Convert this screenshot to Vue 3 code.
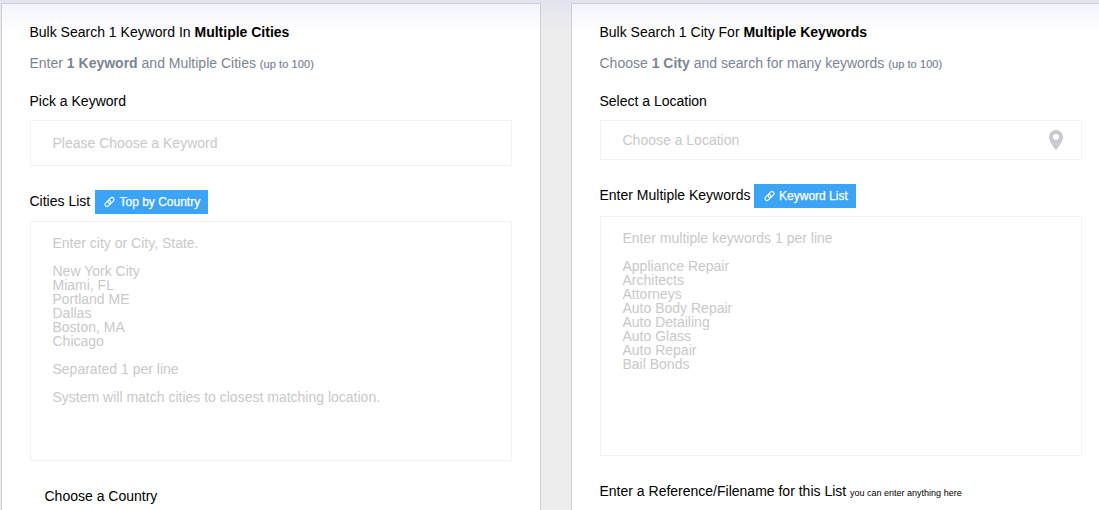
<script setup>
const cities = `Enter city or City, State.

New York City
Miami, FL
Portland ME
Dallas
Boston, MA
Chicago

Separated 1 per line

System will match cities to closest matching location.`
const keywords = `Enter multiple keywords 1 per line

Appliance Repair
Architects
Attorneys
Auto Body Repair
Auto Detailing
Auto Glass
Auto Repair
Bail Bonds`
</script>

<template>
  <main class="page">
    <section class="card">
      <h2 class="title">Bulk Search 1 Keyword In <b>Multiple Cities</b></h2>
      <p class="lead">Enter <b>1 Keyword</b> and Multiple Cities <small>(up to 100)</small></p>
      <div class="label">Pick a Keyword</div>
      <div class="field tall">Please Choose a Keyword</div>
      <div class="label row">
        <span class="row-text">Cities List</span>
        <a class="button top-cities">
          <svg class="link" viewBox="0 0 11 10">
            <g transform="rotate(-45 5.5 5)">
              <rect x="-0.1" y="3" width="6.9" height="4" rx="2" />
              <rect x="4.2" y="3" width="6.9" height="4" rx="2" />
            </g>
          </svg>
          <span>Top by Country</span>
        </a>
      </div>
      <div class="area">{{ cities }}</div>
      <div class="label country">Choose a Country</div>
    </section>
    <section class="card">
      <h2 class="title">Bulk Search 1 City For <b>Multiple Keywords</b></h2>
      <p class="lead">Choose <b>1 City</b> and search for many keywords <small>(up to 100)</small></p>
      <div class="label">Select a Location</div>
      <div class="field">
        <span>Choose a Location</span>
        <svg class="pin" viewBox="0 0 14 20"><path fill-rule="evenodd" d="M7 0a7 7 0 0 0-7 7c0 5 7 13 7 13s7-8 7-13a7 7 0 0 0-7-7zm0 4a3 3 0 1 1 0 6 3 3 0 0 1 0-6z" /></svg>
      </div>
      <div class="label row">
        <span class="row-text">Enter Multiple Keywords</span>
        <a class="button">
          <svg class="link" viewBox="0 0 11 10">
            <g transform="rotate(-45 5.5 5)">
              <rect x="-0.1" y="3" width="6.9" height="4" rx="2" />
              <rect x="4.2" y="3" width="6.9" height="4" rx="2" />
            </g>
          </svg>
          <span>Keyword List</span>
        </a>
      </div>
      <div class="area keywords">{{ keywords }}</div>
      <div class="label reference">Enter a Reference/Filename for this List <small>you can enter anything here</small></div>
    </section>
  </main>
</template>

<style>
body { overflow: hidden; }
</style>

<style scoped>
.page {
  box-sizing: border-box;
  width: 1099px;
  height: 510px;
  padding: 3px 0 0 1px;
  display: flex;
  gap: 30px;
  overflow: hidden;
  background: linear-gradient(#e4e4ef 0, #e5e5ef 4px, #ededed 32px);
  font: 14px/20px "Liberation Sans", Arial, sans-serif;
  color: #000;
}
.card {
  box-sizing: border-box;
  flex: 0 0 540px;
  height: 540px;
  padding: 18px 28px 0;
  border: 1px solid #cdcddb;
  background: linear-gradient(#f3f3fc 0, #fff 28px);
}
.title, .lead, .label { text-indent: -0.5px; }
.title { margin: 0; font-size: 14px; font-weight: 400; line-height: 20px; }
.lead { margin: 11px 0 0; color: #7c8494; line-height: 20px; }
.lead small { font-size: 11px; letter-spacing: 0.08px; -webkit-text-stroke: 0.2px #7c8494; }
.label { margin-top: 17px; height: 20px; }
.field {
  box-sizing: border-box;
  display: flex;
  align-items: center;
  justify-content: space-between;
  height: 40px;
  margin-top: 9px;
  padding: 0 18px 0 21.5px;
  border: 1px solid #f2f2f2;
  border-radius: 1px;
  color: #c9c9c9;
}
.tall { height: 46px; }
.pin { width: 14px; height: 20px; fill: #cbc8cf; }
.row { display: flex; align-items: center; gap: 3.6px; height: 24px; margin-top: 24px; }
.row-text { padding-bottom: 2px; }
.button {
  box-sizing: border-box;
  display: flex;
  align-items: center;
  gap: 4px;
  width: 102px;
  height: 24px;
  padding-left: 10px;
  background: #3ca4f7;
  color: #fff;
  font-size: 12px;
  text-indent: 0;
  white-space: nowrap;
  -webkit-text-stroke: 0.25px #fff;
}
.top-cities { width: 113px; margin-left: 1.1px; padding-left: 9.6px; }
.link { flex: none; width: 11px; height: 10px; overflow: visible; fill: none; stroke: #fff; stroke-width: 1.15; }
.area {
  box-sizing: border-box;
  height: 240px;
  margin-top: 7px;
  padding: 14px 21.5px;
  border: 1px solid #f2f2f2;
  border-radius: 1px;
  color: #c9c9c9;
  line-height: 14px;
  white-space: pre;
}
.keywords { margin-top: 8px; }
.country { margin: 25px 0 0 15px; }
.reference { margin-top: 25px; }
.reference small { font-size: 9px; }
</style>
